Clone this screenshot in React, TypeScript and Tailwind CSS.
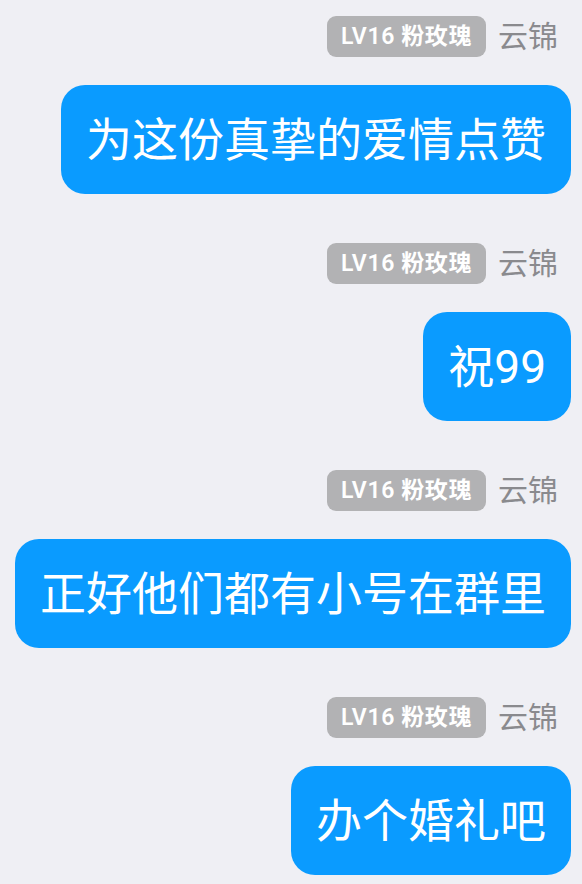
const messages = [
  { text: '为这份真挚的爱情点赞' },
  { text: '祝99' },
  { text: '正好他们都有小号在群里' },
  { text: '办个婚礼吧' },
];

function SenderLine() {
  return (
    <div className="flex items-center justify-end gap-[12px] pr-[13px]">
      <span className="h-[41px] px-[14px] rounded-[9px] bg-[#b2b2b4] text-white text-[23px] font-semibold tracking-[0.6px] flex items-center leading-none">
        LV16 粉玫瑰
      </span>
      <span className="text-[30px] text-[#8a8a8e] leading-none">云锦</span>
    </div>
  );
}

export default function App() {
  return (
    <div
      className="w-[582px] h-[884px] overflow-hidden bg-[#efeff4] pt-[16px] pr-[11px] pl-[14px]"
      style={{ fontFamily: 'Roboto, "Noto Sans CJK SC", sans-serif' }}
    >
      <div className="flex flex-col gap-[49px]">
        {messages.map((m, i) => (
          <div key={i} className="flex flex-col items-end gap-[28px]">
            <SenderLine />
            <div className="h-[109px] px-[25px] rounded-[24px] bg-[#0a9bff] text-white text-[46px] flex items-center leading-none whitespace-nowrap">
              {m.text}
            </div>
          </div>
        ))}
      </div>
    </div>
  );
}
